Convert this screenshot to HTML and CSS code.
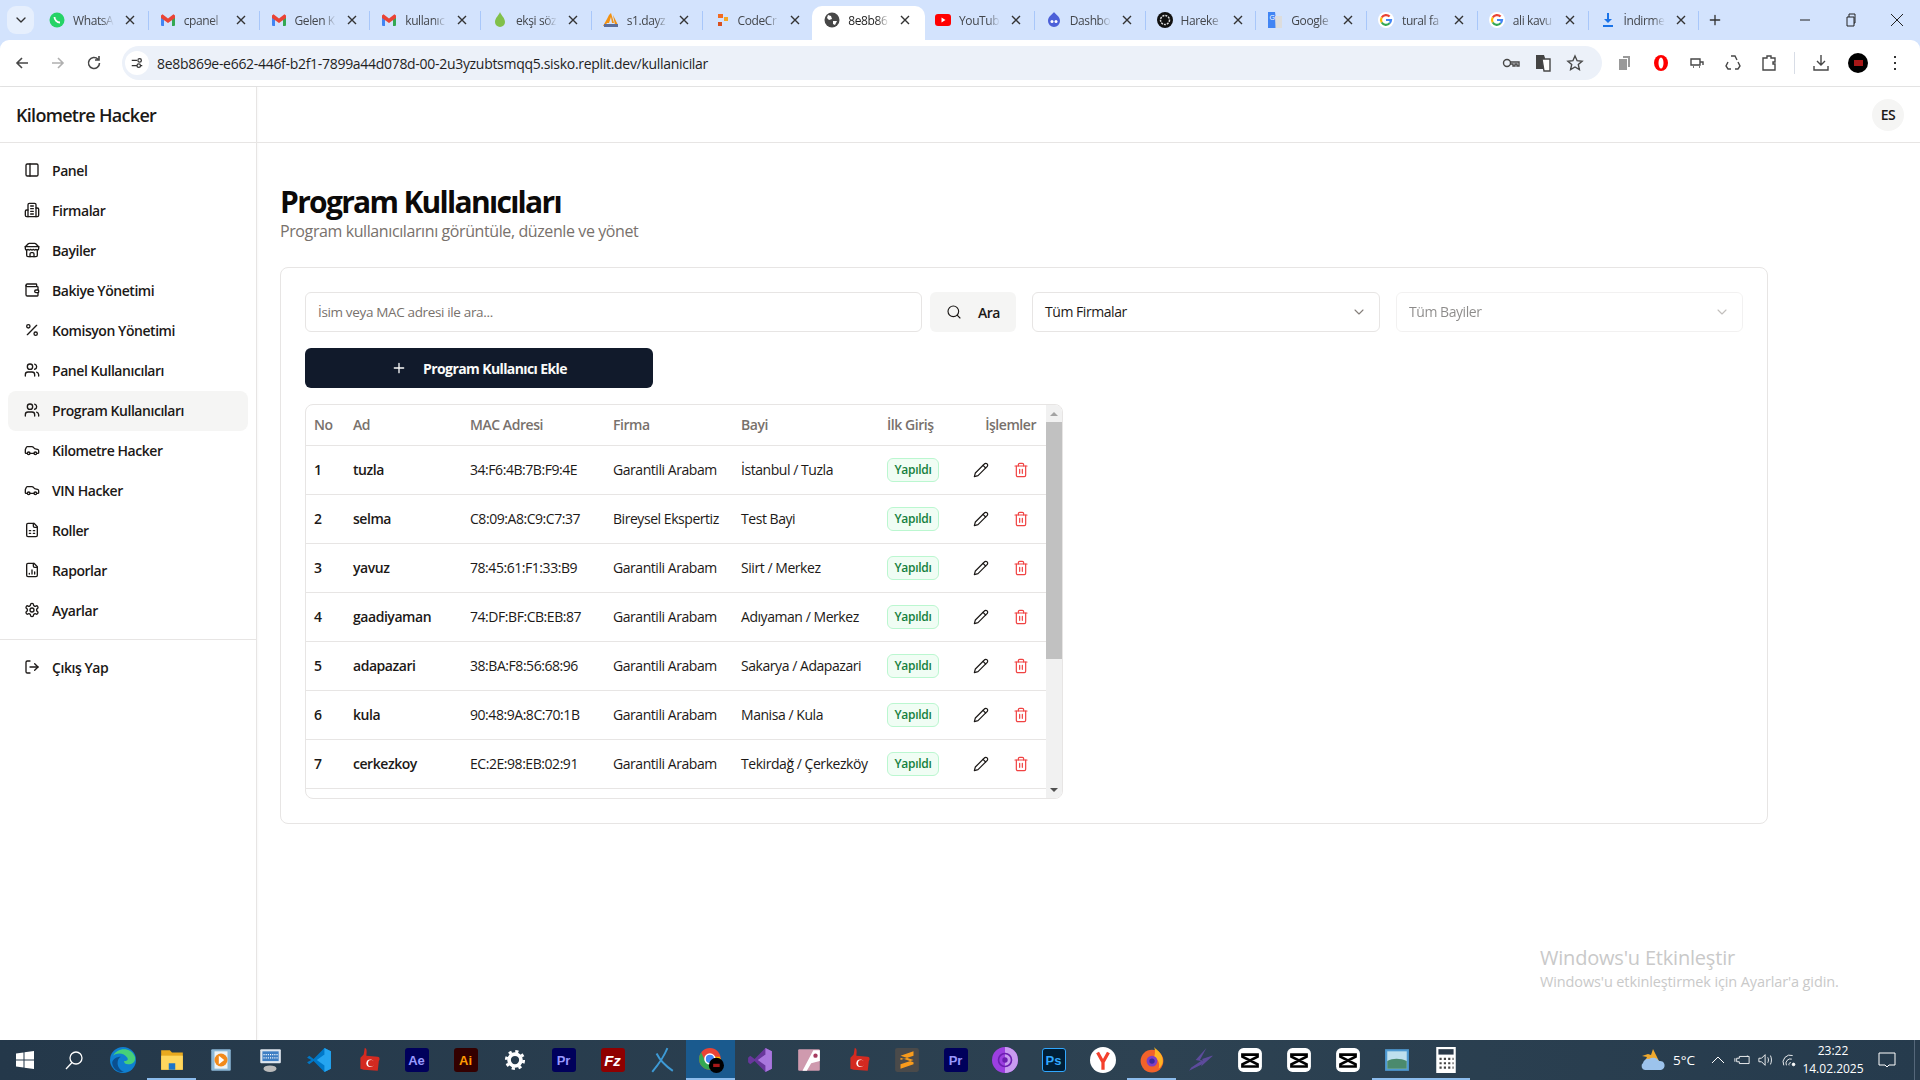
FILE: index.html
```html
<!DOCTYPE html>
<html lang="tr">
<head>
<meta charset="utf-8">
<title>Program Kullanıcıları</title>
<link rel="stylesheet" href="styles.css">
</head>
<body>
<svg class="defs" aria-hidden="true">
  <symbol id="i-panel" viewBox="0 0 24 24"><rect x="3" y="3" width="18" height="18" rx="2"/><path d="M9 3v18"/></symbol>
  <symbol id="i-building" viewBox="0 0 24 24"><path d="M6 22V4a2 2 0 0 1 2-2h8a2 2 0 0 1 2 2v18Z"/><path d="M6 12H4a2 2 0 0 0-2 2v6a2 2 0 0 0 2 2h2"/><path d="M18 9h2a2 2 0 0 1 2 2v9a2 2 0 0 1-2 2h-2"/><path d="M10 6h4M10 10h4M10 14h4M10 18h4"/></symbol>
  <symbol id="i-store" viewBox="0 0 24 24"><path d="m2 7 4.41-4.41A2 2 0 0 1 7.83 2h8.34a2 2 0 0 1 1.42.59L22 7"/><path d="M4 12v8a2 2 0 0 0 2 2h12a2 2 0 0 0 2-2v-8"/><path d="M15 22v-4a2 2 0 0 0-2-2h-2a2 2 0 0 0-2 2v4"/><path d="M2 7h20"/><path d="M22 7v3a2 2 0 0 1-2 2a2.7 2.7 0 0 1-1.59-.63.7.7 0 0 0-.82 0A2.7 2.7 0 0 1 16 12a2.7 2.7 0 0 1-1.59-.63.7.7 0 0 0-.82 0A2.7 2.7 0 0 1 12 12a2.7 2.7 0 0 1-1.59-.63.7.7 0 0 0-.82 0A2.7 2.7 0 0 1 8 12a2.7 2.7 0 0 1-1.59-.63.7.7 0 0 0-.82 0A2.7 2.7 0 0 1 4 12a2 2 0 0 1-2-2V7"/></symbol>
  <symbol id="i-wallet" viewBox="0 0 24 24"><path d="M19 7V4a1 1 0 0 0-1-1H5a2 2 0 0 0 0 4h15a1 1 0 0 1 1 1v4h-3a2 2 0 0 0 0 4h3a1 1 0 0 0 1-1v-2a1 1 0 0 0-1-1"/><path d="M3 5v14a2 2 0 0 0 2 2h15a1 1 0 0 0 1-1v-4"/></symbol>
  <symbol id="i-percent" viewBox="0 0 24 24"><path d="M19 5 5 19"/><circle cx="6.5" cy="6.5" r="2.5"/><circle cx="17.5" cy="17.5" r="2.5"/></symbol>
  <symbol id="i-users" viewBox="0 0 24 24"><path d="M16 21v-2a4 4 0 0 0-4-4H6a4 4 0 0 0-4 4v2"/><circle cx="9" cy="7" r="4"/><path d="M22 21v-2a4 4 0 0 0-3-3.87"/><path d="M16 3.13a4 4 0 0 1 0 7.75"/></symbol>
  <symbol id="i-car" viewBox="0 0 24 24"><path d="M19 17h2c.6 0 1-.4 1-1v-3c0-.9-.7-1.7-1.5-1.9C18.7 10.6 16 10 16 10s-1.3-1.4-2.2-2.3c-.5-.4-1.1-.7-1.8-.7H5c-.6 0-1.1.4-1.4.9l-1.4 2.9A3.7 3.7 0 0 0 2 12v4c0 .6.4 1 1 1h2"/><circle cx="7" cy="17" r="2"/><path d="M9 17h6"/><circle cx="17" cy="17" r="2"/></symbol>
  <symbol id="i-filegrid" viewBox="0 0 24 24"><path d="M15 2H6a2 2 0 0 0-2 2v16a2 2 0 0 0 2 2h12a2 2 0 0 0 2-2V7Z"/><path d="M14 2v4a2 2 0 0 0 2 2h4"/><path d="M8 13h2M14 13h2M8 17h2M14 17h2"/></symbol>
  <symbol id="i-filebar" viewBox="0 0 24 24"><path d="M15 2H6a2 2 0 0 0-2 2v16a2 2 0 0 0 2 2h12a2 2 0 0 0 2-2V7Z"/><path d="M14 2v4a2 2 0 0 0 2 2h4"/><path d="M8 18v-1M12 18v-6M16 18v-3"/></symbol>
  <symbol id="i-gear" viewBox="0 0 24 24"><path d="M12.22 2h-.44a2 2 0 0 0-2 2v.18a2 2 0 0 1-1 1.73l-.43.25a2 2 0 0 1-2 0l-.15-.08a2 2 0 0 0-2.73.73l-.22.38a2 2 0 0 0 .73 2.73l.15.1a2 2 0 0 1 1 1.72v.51a2 2 0 0 1-1 1.74l-.15.09a2 2 0 0 0-.73 2.73l.22.38a2 2 0 0 0 2.73.73l.15-.08a2 2 0 0 1 2 0l.43.25a2 2 0 0 1 1 1.73V20a2 2 0 0 0 2 2h.44a2 2 0 0 0 2-2v-.18a2 2 0 0 1 1-1.73l.43-.25a2 2 0 0 1 2 0l.15.08a2 2 0 0 0 2.73-.73l.22-.39a2 2 0 0 0-.73-2.73l-.15-.08a2 2 0 0 1-1-1.74v-.5a2 2 0 0 1 1-1.74l.15-.09a2 2 0 0 0 .73-2.73l-.22-.38a2 2 0 0 0-2.73-.73l-.15.08a2 2 0 0 1-2 0l-.43-.25a2 2 0 0 1-1-1.73V4a2 2 0 0 0-2-2z"/><circle cx="12" cy="12" r="3"/></symbol>
  <symbol id="i-logout" viewBox="0 0 24 24"><path d="M9 21H5a2 2 0 0 1-2-2V5a2 2 0 0 1 2-2h4"/><path d="m16 17 5-5-5-5"/><path d="M21 12H9"/></symbol>
  <symbol id="i-search" viewBox="0 0 24 24"><circle cx="11" cy="11" r="8"/><path d="m21 21-4.3-4.3"/></symbol>
  <symbol id="i-plus" viewBox="0 0 24 24"><path d="M5 12h14M12 5v14"/></symbol>
  <symbol id="i-chev" viewBox="0 0 24 24"><path d="m6 9 6 6 6-6"/></symbol>
  <symbol id="i-pencil" viewBox="0 0 24 24"><path d="M17 3a2.85 2.83 0 1 1 4 4L7.5 20.5 2 22l1.5-5.5Z"/><path d="m15 5 4 4"/></symbol>
  <symbol id="i-trash" viewBox="0 0 24 24"><path d="M3 6h18"/><path d="M19 6v14c0 1-1 2-2 2H7c-1 0-2-1-2-2V6"/><path d="M8 6V4c0-1 1-2 2-2h4c1 0 2 1 2 2v2"/><path d="M10 11v6M14 11v6"/></symbol>
  <symbol id="f-x" viewBox="0 0 16 16"><path d="M4 4l8 8M12 4l-8 8"/></symbol>
  <symbol id="f-gmail" viewBox="0 0 16 16"><path fill="#4285f4" d="M1 4h3v10H2a1 1 0 0 1-1-1z"/><path fill="#34a853" d="M12 4h3v9a1 1 0 0 1-1 1h-2z"/><path fill="#ea4335" d="M1 3.500 2.500 2.300 8 6.500l5.500-4.200L15 3.500V6L8 11 1 6z"/></symbol>
  <symbol id="f-g" viewBox="0 0 16 16"><circle cx="8" cy="8" r="8" fill="#fff"/><path fill="none" stroke="#ea4335" stroke-width="2.200" d="M11.600 4.600A5 5 0 0 0 3.700 5.500"/><path fill="none" stroke="#fbbc05" stroke-width="2.200" d="M3.700 5.500a5 5 0 0 0 0 5"/><path fill="none" stroke="#34a853" stroke-width="2.200" d="M3.700 10.500a5 5 0 0 0 8 .6"/><path fill="none" stroke="#4285f4" stroke-width="2.200" d="M8 8h5a5 5 0 0 1-1.300 3.100"/></symbol>
  <symbol id="t-capcut" viewBox="0 0 24 24"><rect x="1" y="1" width="22" height="22" rx="5" fill="#fff"/><path fill="none" stroke="#000" stroke-width="2.400" d="M5 7h14v2L5 16v2h14v-2L5 9V7Z"/></symbol>
  <symbol id="t-flag" viewBox="0 0 24 24"><path fill="#d42a20" d="M9 1c2 0 2 3 1.500 7L21 9c2 0 2 3 1 4l-1 9-13-1-3-1V10l3-3Z"/><circle cx="14" cy="15" r="3.500" fill="#fff"/><circle cx="15" cy="15" r="3" fill="#d42a20"/></symbol>
</svg>

<div class="chrome">
  <div class="tabstrip">
    <div class="tabsearch"><svg class="ico dark" width="12" height="12"><use href="#i-chev"/></svg></div>
    <div class="tab"><svg class="fav" viewBox="0 0 16 16"><circle cx="8" cy="8" r="7.500" fill="#25d366"/><path fill="none" stroke="#fff" stroke-width="1.800" d="M5.500 5c0 3 2.500 5.500 5.500 5.500"/></svg><span class="tname">WhatsA</span><svg class="tclose"><use href="#f-x"/></svg></div>
    <div class="tab"><svg class="fav"><use href="#f-gmail"/></svg><span class="tname">cpanel</span><svg class="tclose"><use href="#f-x"/></svg></div>
    <div class="tab"><svg class="fav"><use href="#f-gmail"/></svg><span class="tname">Gelen K</span><svg class="tclose"><use href="#f-x"/></svg></div>
    <div class="tab"><svg class="fav"><use href="#f-gmail"/></svg><span class="tname">kullanıc</span><svg class="tclose"><use href="#f-x"/></svg></div>
    <div class="tab"><svg class="fav" viewBox="0 0 16 16"><path fill="#81c04a" d="M8 0c1 3 5 6 5 10a5 5 0 0 1-10 0C3 6 7 3 8 0Z"/></svg><span class="tname">ekşi söz</span><svg class="tclose"><use href="#f-x"/></svg></div>
    <div class="tab"><svg class="fav" viewBox="0 0 16 16"><path fill="#f29111" d="M8 1 11 11H9L8 5 6 11H4L2 14H0L4 7 6 3ZM10 3l5 10h-3Z"/><path fill="#5b6e9c" d="M1 12h14v3H1z"/></svg><span class="tname">s1.dayz</span><svg class="tclose"><use href="#f-x"/></svg></div>
    <div class="tab"><svg class="fav" viewBox="0 0 16 16"><path fill="#f26b21" d="M4 2h5v4H4z"/><path fill="#f5a623" d="M10 5h4v4h-4z"/><path fill="#d94f1e" d="M4 10h4v4H4z"/></svg><span class="tname">CodeCr</span><svg class="tclose"><use href="#f-x"/></svg></div>
    <div class="tab active"><svg class="fav" viewBox="0 0 16 16"><circle cx="8" cy="8" r="7.500" fill="#474747"/><path fill="#fff" d="M4 3l3 1 1 3-3 1-2-2ZM9 9l4 0-2 4-2-1Z"/></svg><span class="tname">8e8b86</span><svg class="tclose"><use href="#f-x"/></svg></div>
    <div class="tab"><svg class="fav" viewBox="0 0 16 16"><rect y="2" width="16" height="12" rx="3" fill="#f00"/><path fill="#fff" d="M6.500 5.500 10.500 8l-4 2.500Z"/></svg><span class="tname">YouTub</span><svg class="tclose"><use href="#f-x"/></svg></div>
    <div class="tab"><svg class="fav" viewBox="0 0 16 16"><path fill="#4c60d8" d="M8 0c1 2 6 4 6 9a6 6 0 0 1-12 0C2 4 7 2 8 0Z"/><circle cx="6" cy="9.500" r="1.500" fill="#fff"/><circle cx="10" cy="9.500" r="1.500" fill="#fff"/></svg><span class="tname">Dashbo</span><svg class="tclose"><use href="#f-x"/></svg></div>
    <div class="tab"><svg class="fav" viewBox="0 0 16 16"><circle cx="8" cy="8" r="8" fill="#111"/><circle cx="8" cy="8" r="4.500" fill="none" stroke="#ddd" stroke-width="1.500" stroke-dasharray="2 1"/></svg><span class="tname">Hareke</span><svg class="tclose"><use href="#f-x"/></svg></div>
    <div class="tab"><svg class="fav" viewBox="0 0 16 16"><path fill="#4285f4" d="M1 0h7l2 16H1z"/><path fill="#ddd" d="M8 4h7v12H8.500z"/><text x="2.500" y="8" class="favtext">G</text></svg><span class="tname">Google</span><svg class="tclose"><use href="#f-x"/></svg></div>
    <div class="tab"><svg class="fav"><use href="#f-g"/></svg><span class="tname">tural fa</span><svg class="tclose"><use href="#f-x"/></svg></div>
    <div class="tab"><svg class="fav"><use href="#f-g"/></svg><span class="tname">ali kavu</span><svg class="tclose"><use href="#f-x"/></svg></div>
    <div class="tab"><svg class="fav" viewBox="0 0 16 16"><path fill="#1a73e8" d="M7 1h2v6h3L8 11 4 7h3ZM3 13h10v2H3z"/></svg><span class="tname">İndirme</span><svg class="tclose"><use href="#f-x"/></svg></div>
    <svg class="newtab ico dark" width="16" height="16"><use href="#i-plus"/></svg>
    <div class="winctl">
      <svg class="wbtn" viewBox="0 0 16 16"><path d="M3 8h10"/></svg>
      <svg class="wbtn" viewBox="0 0 16 16"><path d="M4 5h7v9H4zM6 5V2h6v9h-1"/></svg>
      <svg class="wbtn" viewBox="0 0 16 16"><path d="M2 2l12 12M14 2 2 14"/></svg>
    </div>
  </div>
  <div class="toolbar">
    <svg class="navbtn" viewBox="0 0 16 16"><path d="M14 8H3M8 3 3 8l5 5"/></svg>
    <svg class="navbtn off" viewBox="0 0 16 16"><path d="M2 8h11M8 3l5 5-5 5"/></svg>
    <svg class="navbtn reload" viewBox="0 0 16 16"><path d="M13.500 8A5.500 5.500 0 1 1 12 4.200M13 1v4H9"/></svg>
    <div class="omnibox">
      <div class="siteinfo"><svg class="mini" viewBox="0 0 16 16"><path d="M2 5h6M12 11h2M2 11h6"/><circle cx="11" cy="5" r="2"/><circle cx="10" cy="11" r="2"/></svg></div>
      <span class="url">8e8b869e-e662-446f-b2f1-7899a44d078d-00-2u3yzubtsmqq5.sisko.replit.dev/kullanicilar</span>
      <div class="omniicons">
        <svg class="tool" viewBox="0 0 18 18"><circle cx="5" cy="9" r="3.500"/><path d="M8.500 8h8.500v4h-2v-2h-2v2h-2v-2H8"/></svg>
        <svg class="tool" viewBox="0 0 18 18"><path fill="#444" stroke="none" d="M2 1h8l1 3v11H2z"/><path fill="#fff" d="M8 5h8v12H10z"/></svg>
        <svg class="tool" viewBox="0 0 18 18"><path d="M9 2l2.100 4.700 5 .5-3.800 3.400 1.100 5L9 13l-4.400 2.600 1.100-5L1.900 7.200l5-.5Z"/></svg>
      </div>
    </div>
    <div class="exts">
      <svg class="tool" viewBox="0 0 18 18"><path fill="#999" stroke="none" d="M3 5h8v11H3zM7 2h7v11h-2V4H7z"/></svg>
      <svg class="tool" viewBox="0 0 18 18"><ellipse cx="9" cy="9" rx="7" ry="8" fill="#f00" stroke="none"/><ellipse cx="9" cy="9" rx="2.500" ry="5.500" fill="#fff" stroke="none"/></svg>
      <svg class="tool" viewBox="0 0 18 18"><path d="M3 5h9v6H3zM12 8h3v3M5 13h1M11 13h1"/></svg>
      <svg class="tool" viewBox="0 0 18 18"><path d="M7 2h4l2 4M4 8l-2 4 2 3h3M14 8l2 4-2 3h-3"/></svg>
      <svg class="tool" viewBox="0 0 18 18"><path d="M3 4h4V2h4v2h4v4h-2v2h2v6H3Z"/></svg>
      <span class="tsep"></span>
      <svg class="tool" viewBox="0 0 18 18"><path d="M9 1v10M5 7l4 4 4-4M2 12v4h14v-4"/></svg>
      <div class="avatar"><span class="avdot"></span></div>
      <svg class="tool" viewBox="0 0 18 18"><path fill="#333" stroke="none" d="M8 2h2v2H8zM8 8h2v2H8zM8 14h2v2H8z"/></svg>
    </div>
  </div>
</div>

<div class="app">
  <aside class="sidebar">
    <div class="brand">Kilometre Hacker</div>
    <nav class="nav">
      <a class="nav-item"><svg class="ico"><use href="#i-panel"/></svg>Panel</a>
      <a class="nav-item"><svg class="ico"><use href="#i-building"/></svg>Firmalar</a>
      <a class="nav-item"><svg class="ico"><use href="#i-store"/></svg>Bayiler</a>
      <a class="nav-item"><svg class="ico"><use href="#i-wallet"/></svg>Bakiye Yönetimi</a>
      <a class="nav-item"><svg class="ico"><use href="#i-percent"/></svg>Komisyon Yönetimi</a>
      <a class="nav-item"><svg class="ico"><use href="#i-users"/></svg>Panel Kullanıcıları</a>
      <a class="nav-item current"><svg class="ico"><use href="#i-users"/></svg>Program Kullanıcıları</a>
      <a class="nav-item"><svg class="ico"><use href="#i-car"/></svg>Kilometre Hacker</a>
      <a class="nav-item"><svg class="ico"><use href="#i-car"/></svg>VIN Hacker</a>
      <a class="nav-item"><svg class="ico"><use href="#i-filegrid"/></svg>Roller</a>
      <a class="nav-item"><svg class="ico"><use href="#i-filebar"/></svg>Raporlar</a>
      <a class="nav-item"><svg class="ico"><use href="#i-gear"/></svg>Ayarlar</a>
    </nav>
    <div class="nav logout">
      <a class="nav-item"><svg class="ico"><use href="#i-logout"/></svg>Çıkış Yap</a>
    </div>
  </aside>
  <div class="content">
    <header class="topbar"><div class="user-badge">ES</div></header>
    <main class="main">
      <h1 class="title">Program Kullanıcıları</h1>
      <p class="subtitle">Program kullanıcılarını görüntüle, düzenle ve yönet</p>
      <section class="card">
        <div class="filters">
          <div class="searchgroup">
            <div class="input">İsim veya MAC adresi ile ara...</div>
            <button class="btn-search"><svg class="ico"><use href="#i-search"/></svg>Ara</button>
          </div>
          <div class="select"><span>Tüm Firmalar</span><svg class="ico chev"><use href="#i-chev"/></svg></div>
          <div class="select disabled"><span>Tüm Bayiler</span><svg class="ico chev"><use href="#i-chev"/></svg></div>
        </div>
        <button class="btn-add"><svg class="ico"><use href="#i-plus"/></svg>Program Kullanıcı Ekle</button>
        <div class="tablewrap">
          <div class="tableview">
            <table class="table">
              <colgroup><col class="c-no"><col class="c-ad"><col class="c-mac"><col class="c-firma"><col class="c-bayi"><col class="c-ilk"><col class="c-ops"></colgroup>
              <thead><tr><th>No</th><th>Ad</th><th>MAC Adresi</th><th>Firma</th><th>Bayi</th><th>İlk Giriş</th><th class="right">İşlemler</th></tr></thead>
              <tbody>
                <tr><td class="strong">1</td><td class="strong">tuzla</td><td>34:F6:4B:7B:F9:4E</td><td>Garantili Arabam</td><td>İstanbul / Tuzla</td><td><span class="badge">Yapıldı</span></td><td><div class="ops"><svg class="ico op"><use href="#i-pencil"/></svg><svg class="ico op red"><use href="#i-trash"/></svg></div></td></tr>
                <tr><td class="strong">2</td><td class="strong">selma</td><td>C8:09:A8:C9:C7:37</td><td>Bireysel Ekspertiz</td><td>Test Bayi</td><td><span class="badge">Yapıldı</span></td><td><div class="ops"><svg class="ico op"><use href="#i-pencil"/></svg><svg class="ico op red"><use href="#i-trash"/></svg></div></td></tr>
                <tr><td class="strong">3</td><td class="strong">yavuz</td><td>78:45:61:F1:33:B9</td><td>Garantili Arabam</td><td>Siirt / Merkez</td><td><span class="badge">Yapıldı</span></td><td><div class="ops"><svg class="ico op"><use href="#i-pencil"/></svg><svg class="ico op red"><use href="#i-trash"/></svg></div></td></tr>
                <tr><td class="strong">4</td><td class="strong">gaadiyaman</td><td>74:DF:BF:CB:EB:87</td><td>Garantili Arabam</td><td>Adıyaman / Merkez</td><td><span class="badge">Yapıldı</span></td><td><div class="ops"><svg class="ico op"><use href="#i-pencil"/></svg><svg class="ico op red"><use href="#i-trash"/></svg></div></td></tr>
                <tr><td class="strong">5</td><td class="strong">adapazari</td><td>38:BA:F8:56:68:96</td><td>Garantili Arabam</td><td>Sakarya / Adapazari</td><td><span class="badge">Yapıldı</span></td><td><div class="ops"><svg class="ico op"><use href="#i-pencil"/></svg><svg class="ico op red"><use href="#i-trash"/></svg></div></td></tr>
                <tr><td class="strong">6</td><td class="strong">kula</td><td>90:48:9A:8C:70:1B</td><td>Garantili Arabam</td><td>Manisa / Kula</td><td><span class="badge">Yapıldı</span></td><td><div class="ops"><svg class="ico op"><use href="#i-pencil"/></svg><svg class="ico op red"><use href="#i-trash"/></svg></div></td></tr>
                <tr><td class="strong">7</td><td class="strong">cerkezkoy</td><td>EC:2E:98:EB:02:91</td><td>Garantili Arabam</td><td>Tekirdağ / Çerkezköy</td><td><span class="badge">Yapıldı</span></td><td><div class="ops"><svg class="ico op"><use href="#i-pencil"/></svg><svg class="ico op red"><use href="#i-trash"/></svg></div></td></tr>
              </tbody>
            </table>
          </div>
          <div class="scrollbar">
            <div class="sb-btn"><span class="arrow-up"></span></div>
            <div class="sb-thumb"></div>
            <div class="sb-btn end"><span class="arrow-down"></span></div>
          </div>
        </div>
      </section>
    </main>
  </div>
</div>

<div class="watermark">
  <div class="wm1">Windows'u Etkinleştir</div>
  <div class="wm2">Windows'u etkinleştirmek için Ayarlar'a gidin.</div>
</div>

<footer class="taskbar">
  <div class="slot"><svg class="tb s20" viewBox="0 0 20 20"><path fill="#fff" d="M1 3.500 8.500 2.400v7H1zM9.500 2.300 19 1v8.400H9.500zM1 10.500h7.500v7L1 16.500zM9.500 10.500H19V19l-9.500-1.300z"/></svg></div>
  <div class="slot"><svg class="tb s20" viewBox="0 0 20 20"><circle cx="12" cy="8" r="6" fill="none" stroke="#fff" stroke-width="1.300"/><path d="M8 12.500 2 19" stroke="#fff" stroke-width="1.300"/></svg></div>
  <div class="slot"><svg class="tb" viewBox="0 0 24 24"><circle cx="12" cy="12" r="12" fill="#0f7fd0"/><path fill="#46d07a" d="M3 8C6 1 19-1 23 9c1 4-2 7-6 7-3 0-4-1-4-3 3 0 4-1 3-3C13 5 6 5 3 8Z"/><path fill="#0a4f8f" d="M2 14c0 6 6 10 11 9-3-1-6-4-6-8 0-3 1-5 3-6-4 0-7 2-8 5Z"/></svg></div>
  <div class="slot under"><svg class="tb" viewBox="0 0 24 24"><path fill="#e8a91f" d="M2 3h8l2 2h10v16H2z"/><path fill="#ffd75e" d="M2 8h20v13H2z"/><path fill="#1b74c9" d="M9 21v-6h6v6z"/></svg></div>
  <div class="slot"><svg class="tb" viewBox="0 0 24 24"><rect x="3" y="2" width="18" height="20" rx="1" fill="#8cb8d8"/><rect x="6" y="4" width="12" height="16" fill="#eef3f6"/><circle cx="12" cy="12" r="6" fill="#f28a1c"/><path fill="#fff" d="M10 8l5 4-5 4z"/></svg></div>
  <div class="slot"><svg class="tb" viewBox="0 0 24 24"><rect x="3" y="2" width="19" height="13" rx="1" fill="#dfe6ee"/><rect x="5" y="4" width="15" height="9" fill="#3f7fc4"/><path stroke="#fff" stroke-dasharray="1 1" d="M6 7h13M6 10h13"/><ellipse cx="12" cy="20" rx="6" ry="3" fill="#bbb"/></svg></div>
  <div class="slot"><svg class="tb" viewBox="0 0 24 24"><path fill="#0078c8" d="M17 1l6 3v16l-6 3L7 13l-4 3-2-2 4-2-4-2 2-2 4 3z"/><path fill="#25a5f0" d="M17 1l6 3v16l-6 3V7l-7 5 7 5z"/></svg></div>
  <div class="slot"><svg class="tb"><use href="#t-flag"/></svg></div>
  <div class="slot"><span class="tile ae">Ae</span></div>
  <div class="slot"><span class="tile ai">Ai</span></div>
  <div class="slot"><svg class="tb s22" viewBox="0 0 24 24"><circle cx="12" cy="12" r="6.500" fill="none" stroke="#fff" stroke-width="4"/><circle cx="12" cy="12" r="9.500" fill="none" stroke="#fff" stroke-width="3" stroke-dasharray="3.500 3.960"/></svg></div>
  <div class="slot"><span class="tile pr">Pr</span></div>
  <div class="slot"><span class="tile fz">Fz</span></div>
  <div class="slot"><svg class="tb" viewBox="0 0 24 24"><path fill="none" stroke="#3d9ad6" stroke-width="1.800" d="M17 1C14 8 12 12 3 23M7 6c3 6 9 12 15 16"/></svg></div>
  <div class="slot active under"><svg class="tb" viewBox="0 0 24 24"><circle cx="11" cy="11" r="10" fill="#ea4335"/><path fill="#fbbc05" d="M21 11A10 10 0 0 1 11 21l4-8-4-4h9z"/><path fill="#34a853" d="M1 11A10 10 0 0 0 11 21l4-7-8 0-4-9A10 10 0 0 0 1 11Z"/><circle cx="11" cy="11" r="4.500" fill="#4285f4" stroke="#fff" stroke-width="1.500"/><circle cx="17" cy="17" r="7" fill="#000"/><rect x="14" y="15.500" width="6" height="3" fill="#a81818"/></svg></div>
  <div class="slot"><svg class="tb" viewBox="0 0 24 24"><path fill="#68379c" d="M17 1l6 3v16l-6 3L7 13l-4 3-2-2V10l2-2 4 3z"/><path fill="#a977de" d="M17 1l6 3v16l-6 3V7l-7 5 7 5z"/></svg></div>
  <div class="slot"><svg class="tb" viewBox="0 0 24 24"><rect x="2" y="2" width="20" height="20" rx="1" fill="#cf9aae"/><path fill="#fff" d="M6 22 16 3h6v10l-8 2-4 7z"/><circle cx="18" cy="8" r="2" fill="#a63a5f"/></svg></div>
  <div class="slot"><svg class="tb"><use href="#t-flag"/></svg></div>
  <div class="slot"><svg class="tb" viewBox="0 0 24 24"><rect x="1" y="1" width="22" height="22" rx="2" fill="#4a4a4a"/><path fill="#f89b1c" d="M18 4v4L6 12V8zM18 12v4L6 20v-4zM6 10l12 4v-2L6 8z"/></svg></div>
  <div class="slot"><span class="tile pr">Pr</span></div>
  <div class="slot"><svg class="tb" viewBox="0 0 24 24"><circle cx="12" cy="12" r="12" fill="#9c3fe0"/><path fill="#c99bf0" d="M12 0a12 12 0 0 1 0 24z"/><circle cx="12" cy="12" r="6" fill="none" stroke="#6c1fb0" stroke-width="1.500"/><circle cx="12" cy="12" r="2.500" fill="#6c1fb0"/></svg></div>
  <div class="slot"><span class="tile ps">Ps</span></div>
  <div class="slot"><svg class="tb" viewBox="0 0 24 24"><circle cx="12" cy="12" r="12" fill="#fff"/><path fill="none" stroke="#f4402c" stroke-width="3" d="M7 5l5 9 5-9M12 13v8"/></svg></div>
  <div class="slot under"><svg class="tb" viewBox="0 0 24 24"><circle cx="12" cy="13" r="10.500" fill="#f2622a"/><path fill="#ffb423" d="M14 0c2 3 8 5 8 13 0 3-2 6-4 7 2-5-1-9-4-11 1-3 1-6 0-9Z"/><circle cx="12" cy="13" r="5" fill="#7d3fc4"/><circle cx="12" cy="13" r="2.500" fill="#3a2a9e"/></svg></div>
  <div class="slot"><svg class="tb" viewBox="0 0 24 24"><path fill="#5d4b9c" d="M17 1 7 12l5 1-9 6-2 3 12-6 3-3-5-1z"/><path fill="#5d4b9c" d="M22 8 13 11l1 2-2 5 11-10z"/></svg></div>
  <div class="slot"><svg class="tb"><use href="#t-capcut"/></svg></div>
  <div class="slot"><svg class="tb"><use href="#t-capcut"/></svg></div>
  <div class="slot"><svg class="tb"><use href="#t-capcut"/></svg></div>
  <div class="slot under"><svg class="tb" viewBox="0 0 24 24"><rect x="1" y="2" width="22" height="20" fill="#4f9ad2"/><rect x="3" y="4" width="18" height="16" fill="#bfe0ee"/><path fill="#4b8a6d" d="M3 13c5-3 12-3 18 0v7H3z"/></svg></div>
  <div class="slot under"><svg class="tb" viewBox="0 0 24 24"><rect x="3" y="0" width="18" height="24" fill="#fff"/><rect x="5" y="2" width="14" height="5" fill="#2b3a4a"/><path stroke="#444" stroke-width="2" stroke-dasharray="2 2" d="M6 11h13M6 15h13M6 19h13"/></svg></div>
  <div class="tray">
    <svg class="weather" viewBox="0 0 26 24"><path fill="#f0a92d" d="M13 1l3 6 3 6H5l2-4-5-1 6-2 3 1z"/><path fill="#9cc3ec" d="M5 22a4 4 0 0 1-2-7 5 5 0 0 1 6-4 7 7 0 0 1 10 2 4.500 4.500 0 0 1 2 9z"/></svg>
    <span class="temp">5°C</span>
    <svg class="trayico" viewBox="0 0 16 16"><path d="M2 11l6-6 6 6"/></svg>
    <svg class="trayico" viewBox="0 0 18 16"><path d="M6 4h11v8H6V10H3V6h3zM1 6v4M15 4v-1"/></svg>
    <svg class="trayico" viewBox="0 0 18 16"><path d="M1 6h3l4-4v12l-4-4H1zM11 5c1 2 1 4 0 6M14 3c1.500 3 1.500 7 0 10"/></svg>
    <svg class="trayico" viewBox="0 0 18 16"><path d="M2 14A8 8 0 0 1 12 3M5 14a5 5 0 0 1 6-7M8 14a2 2 0 0 1 2-3"/><circle cx="13" cy="13" r="1.500" fill="#fff"/></svg>
    <div class="clock"><span>23:22</span><span>14.02.2025</span></div>
    <svg class="trayico notif" viewBox="0 0 18 18"><path d="M1 2h16v12h-6l-2 2-2-2H1z"/></svg>
  </div>
</footer>
</body>
</html>
```

FILE: styles.css
```css
* { box-sizing: border-box; }
html, body { margin: 0; height: 100%; }
body {
  display: flex;
  flex-direction: column;
  height: 1080px;
  overflow: hidden;
  background: #fff;
  color: #1c1917;
  font-family: "Open Sans", "Noto Sans", sans-serif;
  font-size: 14px;
  letter-spacing: -0.45px;
}
.defs { display: none; }
.ico {
  width: 16px; height: 16px; flex: none;
  fill: none; stroke: currentColor; stroke-width: 2; stroke-linecap: round; stroke-linejoin: round;
}
.dark { color: #333; }

/* browser frame */
.chrome { flex: none; height: 87px; background: #d3e3fd; }
.tabstrip { display: flex; height: 40px; align-items: flex-end; padding-left: 7px; position: relative; }
.tabsearch { width: 27px; height: 28px; margin: 0 4px 6px 0; border-radius: 9px; background: #e6effd; display: flex; align-items: center; justify-content: center; }
.tab { flex: none; width: 110.75px; height: 34px; display: flex; align-items: center; padding: 0 0 6px 11px; color: #44474c; font-size: 12px; border-radius: 10px 10px 0 0; }
.tab::after { content: ""; width: 1px; height: 19px; margin-left: 9.75px; background: #a8c7fa; }
.tab.active { background: #fff; margin: 0 -1px; width: 112.75px; padding-left: 12px; color: #1f1f1f; }
.tab.active::after, .tab:has(+ .active)::after { background: transparent; }
.fav { width: 16px; height: 16px; flex: none; }
.favtext { font-size: 7px; fill: #fff; font-family: "Liberation Sans", sans-serif; }
.tname { width: 41px; margin-left: 8px; white-space: nowrap; overflow: hidden; letter-spacing: -0.4px; -webkit-mask-image: linear-gradient(90deg, #000 70%, transparent); mask-image: linear-gradient(90deg, #000 70%, transparent); }
.tclose { width: 16px; height: 16px; flex: none; margin-left: 8px; fill: none; stroke: #333; stroke-width: 1.400; }
.newtab { margin: 0 0 12px 8px; }
.winctl { margin-left: auto; display: flex; align-self: center; gap: 30px; padding-right: 15px; }
.wbtn { width: 16px; height: 16px; fill: none; stroke: #222; stroke-width: 1; }
.toolbar { height: 47px; background: #fff; border-bottom: 1px solid #e3e3e3; border-radius: 9px 9px 0 0; display: flex; align-items: center; padding-left: 14px; }
.navbtn { width: 16px; height: 16px; flex: none; margin-right: 20px; fill: none; stroke: #474747; stroke-width: 1.600; }
.navbtn.off { stroke: #b0b0b0; }
.navbtn.reload { margin-right: 20px; }
.omnibox { width: 1480px; height: 34px; border-radius: 17px; background: #ecf1f9; display: flex; align-items: center; padding-left: 3px; }
.siteinfo { width: 24px; height: 24px; border-radius: 50%; background: #fff; display: flex; align-items: center; justify-content: center; flex: none; }
.mini { width: 14px; height: 14px; fill: none; stroke: #333; stroke-width: 1.400; }
.url { margin-left: 8px; font-size: 14px; color: #1f1f1f; letter-spacing: -0.3px; }
.omniicons { margin-left: auto; display: flex; gap: 14px; padding-right: 18px; }
.tool { width: 18px; height: 18px; flex: none; fill: none; stroke: #474747; stroke-width: 1.400; }
.exts { flex: 1; display: flex; align-items: center; gap: 18px; padding-left: 14px; }
.tsep { width: 1px; height: 22px; background: #d8dde6; margin: 0 -1px 0 -2px; }
.avatar { width: 20px; height: 20px; border-radius: 50%; background: #000; display: flex; align-items: center; justify-content: center; flex: none; }
.avdot { width: 9px; height: 6px; background: #a81818; }

/* app */
.app { flex: 1; display: flex; min-height: 0; }
.sidebar { flex: none; width: 257px; border-right: 1px solid #e7e5e4; box-shadow: 1px 0 2px rgba(0,0,0,.03); }
.brand { height: 56px; display: flex; align-items: center; padding: 0 0 0 16px; border-bottom: 1px solid #e7e5e4; font-size: 18px; font-weight: 600; letter-spacing: -0.7px; }
.nav { padding: 8px; display: flex; flex-direction: column; }
.nav-item { height: 40px; display: flex; align-items: center; gap: 12px; padding: 0 0 2px 16px; border-radius: 8px; font-weight: 600; font-size: 14px; color: #1c1917; }
.nav-item.current { background: #f5f5f4; }
.logout { border-top: 1px solid #e7e5e4; }
.content { flex: 1; min-width: 0; }
.topbar { height: 56px; border-bottom: 1px solid #e7e5e4; display: flex; align-items: center; justify-content: flex-end; padding-right: 16px; }
.user-badge { width: 32px; height: 32px; border-radius: 50%; background: #f5f5f4; display: flex; align-items: center; justify-content: center; font-size: 14px; font-weight: 600; }
.main { padding: 41px 23px; width: 1534px; }
.title { margin: 0; font-size: 30px; line-height: 36px; font-weight: 700; letter-spacing: -1.7px; color: #0c0a09; }
.subtitle { margin: -1px 0 24px; font-size: 16px; line-height: 24px; color: #78716c; letter-spacing: -0.4px; }
.card { border: 1px solid #e7e5e4; border-radius: 8px; padding: 24px; display: flex; flex-direction: column; gap: 16px; }
.filters { display: grid; grid-template-columns: 1fr 348px 347px; gap: 16px; }
.searchgroup { display: flex; gap: 8px; }
.input { flex: 1; height: 40px; border: 1px solid #e7e5e4; border-radius: 6px; display: flex; align-items: center; padding-left: 12px; font-size: 13.500px; letter-spacing: -0.35px; color: #78716c; }
.btn-search { flex: none; width: 86px; height: 40px; border: 0; border-radius: 6px; background: #f5f5f4; color: #1c1917; display: flex; align-items: center; justify-content: center; gap: 16px; font: inherit; font-weight: 600; letter-spacing: inherit; }
.btn-search .ico { stroke-width: 1.700; }
.select { height: 40px; border: 1px solid #e7e5e4; border-radius: 6px; display: flex; align-items: center; justify-content: space-between; padding: 0 12px 1px; font-size: 14px; }
.select.disabled { opacity: .5; }
.chev { color: #78716c; opacity: .9; stroke-width: 1.600; }
.btn-add { width: 348px; height: 40px; border: 0; border-radius: 6px; background: #111a2b; color: #fafaf9; display: flex; align-items: center; justify-content: center; gap: 16px; font: inherit; font-weight: 700; letter-spacing: -0.6px; }
.tablewrap { width: 758px; height: 395px; border: 1px solid #e7e5e4; border-radius: 8px; overflow: hidden; display: flex; }
.tableview { flex: 1; min-width: 0; overflow: hidden; }
.scrollbar { flex: none; width: 16px; background: #f1f1f1; display: flex; flex-direction: column; }
.sb-btn { flex: none; height: 17px; display: flex; align-items: center; justify-content: center; }
.sb-btn.end { margin-top: auto; height: 16px; }
.sb-thumb { flex: none; height: 237px; background: #c1c1c1; }
.arrow-up { width: 0; height: 0; border: 4px solid transparent; border-top: 0; border-bottom: 4px solid #a3a3a3; }
.arrow-down { width: 0; height: 0; border: 4px solid transparent; border-bottom: 0; border-top: 4px solid #505050; }
.table { width: 740px; table-layout: fixed; border-collapse: collapse; }
.c-no { width: 39px; } .c-ad { width: 117px; } .c-mac { width: 143px; } .c-firma { width: 128px; } .c-bayi { width: 146px; } .c-ilk { width: 76px; } .c-ops { width: 91px; }
th { height: 40px; padding: 0 8px; text-align: left; font-weight: 600; color: #78716c; border-bottom: 1px solid #e7e5e4; white-space: nowrap; }
th.right { text-align: right; padding-right: 10px; }
td { height: 49px; padding: 0 8px; border-bottom: 1px solid #e7e5e4; white-space: nowrap; }
.strong { font-weight: 600; }
.badge { display: inline-flex; align-items: center; justify-content: center; width: 52px; height: 24px; border: 1px solid #bbf7d0; border-radius: 6px; background: #f0fdf4; color: #15803d; font-size: 12px; font-weight: 600; letter-spacing: -0.3px; }
.ops { display: flex; justify-content: flex-end; gap: 24px; padding-right: 9px; }
.op { stroke-width: 1.800; }
.red { color: #f04242; }

/* watermark */
.watermark { position: absolute; left: 1540px; top: 944px; color: #c9c9c9; font-family: "Open Sans", sans-serif; letter-spacing: -0.2px; }
.wm1 { font-size: 20px; line-height: 28px; }
.wm2 { font-size: 14.500px; line-height: 20px; letter-spacing: -0.12px; }

/* taskbar */
.taskbar { flex: none; height: 40px; display: flex; background: linear-gradient(90deg, #24384a, #2d4252 60%, #263b4d); color: #fff; letter-spacing: 0; }
.slot { flex: none; width: 49px; height: 40px; display: flex; align-items: center; justify-content: center; }
.slot.active { background: #1a5a8e; }
.slot.under { box-shadow: inset 0 -2px 0 #8cbcec; }
.tb { width: 26px; height: 26px; flex: none; }
.s20 { width: 20px; height: 20px; }
.s22 { width: 22px; height: 22px; }
.tile { width: 24px; height: 24px; border-radius: 3px; display: flex; align-items: center; justify-content: center; font: 700 13px "Liberation Sans", sans-serif; }
.ae { background: #00005b; color: #9999ff; }
.ai { background: #300; color: #ff9a00; }
.pr { background: #00005b; color: #9999ff; }
.ps { background: #001e36; color: #31a8ff; border: 1px solid #31a8ff; }
.fz { background: #8f0000; color: #fff; font-size: 15px; font-style: italic; }
.tray { margin-left: auto; display: flex; align-items: center; padding-right: 24px; box-shadow: inset -5px 0 0 #283c4e, inset -6px 0 0 #55677a; }
.weather { width: 26px; height: 24px; margin-right: 2px; }
.temp { flex: none; font-size: 13.500px; width: 38px; padding-left: 5px; }
.trayico { width: 16px; height: 16px; flex: none; margin: 0 4px; fill: none; stroke: #fff; stroke-width: 1; }
.clock { flex: none; width: 62px; display: flex; flex-direction: column; align-items: center; font-size: 12px; line-height: 18px; }
.notif { width: 18px; height: 18px; margin: 0 0 0 14px; }
```
